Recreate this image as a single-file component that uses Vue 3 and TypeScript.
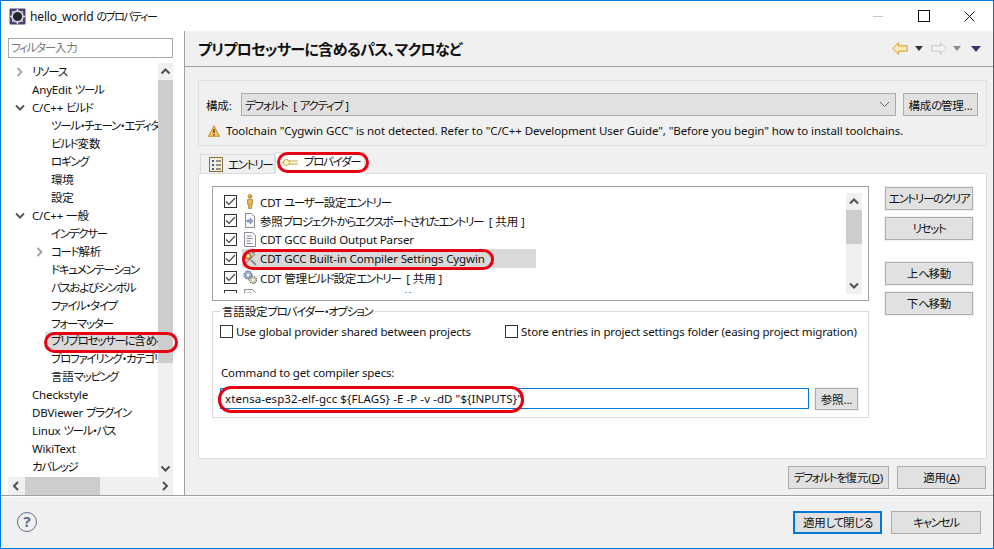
<script setup lang="ts">
import { h } from 'vue'

// Japanese kana set tighter than the rest of the text, as in the UI font of the original.
const Jp = (props: { s: string }) =>
  props.s.split(/([\u3040-\u30FF\u3001]+)/).map((part, i) =>
    i % 2 === 1 ? h('span', { class: 'k' }, part) : part,
  )
Jp.props = ['s']

interface TreeItem { label: string; level: number; arrow?: 'right' | 'down'; selected?: boolean }
const tree: TreeItem[] = [
  { label: 'リソース', level: 0, arrow: 'right' },
  { label: 'AnyEdit ツール', level: 0 },
  { label: 'C/C++ ビルド', level: 0, arrow: 'down' },
  { label: 'ツール・チェーン・エディタ', level: 1 },
  { label: 'ビルド変数', level: 1 },
  { label: 'ロギング', level: 1 },
  { label: '環境', level: 1 },
  { label: '設定', level: 1 },
  { label: 'C/C++ 一般', level: 0, arrow: 'down' },
  { label: 'インデクサー', level: 1 },
  { label: 'コード解析', level: 1, arrow: 'right' },
  { label: 'ドキュメンテーション', level: 1 },
  { label: 'パスおよびシンボル', level: 1 },
  { label: 'ファイル・タイプ', level: 1 },
  { label: 'フォーマッター', level: 1 },
  { label: 'プリプロセッサーに含めるパス、マクロなど', level: 1, selected: true },
  { label: 'プロファイリング・カテゴリー', level: 1 },
  { label: '言語マッピング', level: 1 },
  { label: 'Checkstyle', level: 0 },
  { label: 'DBViewer プラグイン', level: 0 },
  { label: 'Linux ツール・パス', level: 0 },
  { label: 'WikiText', level: 0 },
  { label: 'カバレッジ', level: 0 },
]
interface Provider { label: string; icon: string; selected?: boolean }
const providers: Provider[] = [
  { label: 'CDT ユーザー設定エントリー', icon: 'person' },
  { label: '参照プロジェクトからエクスポートされたエントリー  [ 共用 ]', icon: 'import' },
  { label: 'CDT GCC Build Output Parser', icon: 'doc' },
  { label: 'CDT GCC Built-in Compiler Settings Cygwin', icon: 'tool', selected: true },
  { label: 'CDT 管理ビルド設定エントリー  [ 共用 ]', icon: 'gears' },
  { label: 'Contributed Path Entries  [ 共用 ]', icon: 'doc' },
]
</script>

<template>
  <div class="window">
    <header class="titlebar">
      <svg class="app-icon" width="17" height="17" viewBox="0 0 17 17">
        <rect x="0.5" y="0.5" width="16" height="16" rx="1" fill="#4b3f72" />
        <circle cx="8.5" cy="8.5" r="6.2" fill="#d8d8de" />
        <circle cx="8.5" cy="8.5" r="4.6" fill="#24222e" />
        <path d="M8.5 1v3M8.5 13v3M1 8.5h3M13 8.5h3M3.2 3.2l2 2M11.8 11.8l2 2M13.8 3.2l-2 2M5.2 11.8l-2 2" stroke="#d8d8de" stroke-width="1.4" />
      </svg>
      <span class="title-text"><Jp s="hello_world のプロパティー" /></span>
      <div class="win-controls">
        <span class="ctl-min"></span>
        <span class="ctl-max"></span>
        <svg width="11" height="11" viewBox="0 0 11 11"><path d="M0.5 0.5l10 10M10.5 0.5l-10 10" stroke="#111" stroke-width="1" /></svg>
      </div>
    </header>

    <div class="main">
      <aside class="sidebar">
        <div class="filter"><Jp s="フィルター入力" /></div>
        <div class="tree-box">
          <div class="tree-list">
            <div v-for="item in tree" :key="item.label" class="tree-row" :class="{ 'lvl1': item.level === 1 }">
              <svg v-if="item.arrow === 'right'" class="chev" width="8" height="10" viewBox="0 0 8 10"><path d="M1.5 1l4 4-4 4" fill="none" stroke="#a6a6a6" stroke-width="2" /></svg>
              <svg v-else-if="item.arrow === 'down'" class="chev down" width="10" height="8" viewBox="0 0 10 8"><path d="M1 1.5l4 4 4-4" fill="none" stroke="#595959" stroke-width="2" /></svg>
              <span class="tree-label" :class="{ sel: item.selected }"><Jp :s="item.label" /></span>
            </div>
          </div>
          <div class="vscroll">
            <svg width="15" height="17" viewBox="0 0 15 17"><path d="M3.5 10.5l4-4 4 4" fill="none" stroke="#505050" stroke-width="2" /></svg>
            <div class="vtrack"><div class="vthumb"></div></div>
            <svg width="15" height="17" viewBox="0 0 15 17"><path d="M3.5 6.5l4 4 4-4" fill="none" stroke="#505050" stroke-width="2" /></svg>
          </div>
        </div>
        <div class="hscroll">
          <svg width="17" height="18" viewBox="0 0 17 18"><path d="M10 5l-4 4 4 4" fill="none" stroke="#505050" stroke-width="2" /></svg>
          <div class="hthumb"></div>
          <svg class="hright" width="17" height="18" viewBox="0 0 17 18"><path d="M7 5l4 4-4 4" fill="none" stroke="#505050" stroke-width="2" /></svg>
        </div>
      </aside>

      <section class="content">
        <div class="page-head">
          <h1 class="page-title"><Jp s="プリプロセッサーに含めるパス、マクロなど" /></h1>
          <div class="nav">
            <svg width="16" height="13" viewBox="0 0 16 13"><path d="M0.8 6.5L6.5 0.8v3h8.7v5.4H6.5v3z" fill="#fbe9b4" stroke="#d99a2b" /></svg>
            <span class="tri"></span>
            <svg class="fwd" width="16" height="13" viewBox="0 0 16 13"><path d="M15.2 6.5L9.5 0.8v3H0.8v5.4h8.7v3z" fill="#f4f4f4" stroke="#c4c4c4" /></svg>
            <span class="tri gray"></span>
            <span class="tri purple"></span>
          </div>
        </div>

        <div class="page-body">
          <div class="config">
            <div class="config-row">
              <label class="config-label">構成:</label>
              <div class="combo">
                <span class="pre"><Jp s="デフォルト  [ アクティブ ]" /></span>
                <svg width="11" height="7" viewBox="0 0 11 7"><path d="M1 1l4.500 4.500L10 1" fill="none" stroke="#666" /></svg>
              </div>
              <button class="btn manage"><Jp s="構成の管理..." /></button>
            </div>
            <div class="warn-row">
              <svg width="12" height="12" viewBox="0 0 12 12"><path d="M6 0.8L11.500 11.300H0.500z" fill="#f6c65b" stroke="#c58a2c" /><path d="M6 4v4M6 9v1.500" stroke="#333" stroke-width="1.300" /></svg>
              <span>Toolchain "Cygwin GCC" is not detected. Refer to "C/C++ Development User Guide", "Before you begin" how to install toolchains.</span>
            </div>
          </div>

          <div class="tabs">
            <div class="tab">
              <svg width="14" height="15" viewBox="0 0 14 15"><rect x="0.500" y="0.500" width="13" height="14" fill="#f3efdc" stroke="#8a6d3b" /><path d="M3 3h2v2H3zM3 7h2v2H3zM3 11h2v2H3z" fill="#2e5fa8" /><path d="M7 4h5M7 8h5M7 12h5" stroke="#333" /></svg>
              <span><Jp s="エントリー" /></span>
            </div>
            <div class="tab active">
              <svg width="16" height="9" viewBox="0 0 16 9"><circle cx="4.500" cy="4.500" r="3" fill="#fff4c0" stroke="#c9a227" /><path d="M0 4.500h2M7 3h9M7 6h9" stroke="#c9a227" /></svg>
              <span class="tab-text"><Jp s="プロバイダー" /></span>
            </div>
          </div>

          <div class="panel">
            <div class="panel-left">
              <div class="list">
                <div class="list-rows">
                  <div v-for="p in providers" :key="p.label" class="prov-row">
                    <span class="check"><svg width="11" height="11" viewBox="0 0 11 11"><path d="M1 5.500l3 3 6-6.500" fill="none" stroke="#444" stroke-width="1.200" /></svg></span>
                    <span class="prov-main" :class="{ sel: p.selected }">
                      <svg class="prov-icon" width="14" height="15" viewBox="0 0 14 15">
                        <template v-if="p.icon === 'person'">
                          <circle cx="7" cy="2.500" r="2" fill="#e2a93a" stroke="#9a6a1c" stroke-width="0.600" />
                          <path d="M4.500 5.500h5v5H8.500v4h-3v-4H4.500z" fill="#e8b24a" stroke="#9a6a1c" stroke-width="0.600" />
                        </template>
                        <template v-else-if="p.icon === 'import'">
                          <path d="M2.500 0.500h6l3 3v11h-9z" fill="#f7f7f7" stroke="#8e8e8e" />
                          <path d="M4 7h3V5l3 3-3 3V9H4z" fill="#8fa9c9" stroke="#58719a" stroke-width="0.500" />
                        </template>
                        <template v-else-if="p.icon === 'doc'">
                          <path d="M1.500 0.500h8l3 3v11h-11z" fill="#fbfbfb" stroke="#8e8e8e" />
                          <path d="M3.500 4h5M3.500 6.500h6M3.500 9h4M3.500 11.500h6" stroke="#7d8ea6" />
                        </template>
                        <template v-else-if="p.icon === 'tool'">
                          <path d="M1 14L12 3" stroke="#b58a8a" stroke-width="1.600" />
                          <circle cx="5" cy="5" r="3" fill="#eac35a" stroke="#7b6a36" />
                          <circle cx="5" cy="5" r="1" fill="#fff" />
                          <path d="M8 9l5 5" stroke="#777" stroke-width="1.600" />
                          <path d="M9 2l3-1" stroke="#777" stroke-width="1.600" />
                        </template>
                        <template v-else>
                          <circle cx="5" cy="5" r="4" fill="#9fb3cf" stroke="#44526e" stroke-dasharray="1.500 1" />
                          <circle cx="10" cy="10" r="3.600" fill="#d6c9a8" stroke="#44526e" stroke-dasharray="1.500 1" />
                          <circle cx="5" cy="5" r="1.200" fill="#fff" />
                          <circle cx="10" cy="10" r="1.200" fill="#fff" />
                        </template>
                      </svg>
                      <span class="prov-label"><Jp :s="p.label" /></span>
                    </span>
                  </div>
                </div>
                <div class="list-scroll">
                  <svg width="16" height="17" viewBox="0 0 16 17"><path d="M4 10.500l4-4 4 4" fill="none" stroke="#505050" stroke-width="2" /></svg>
                  <div class="list-track"><div class="list-thumb"></div></div>
                  <svg width="16" height="17" viewBox="0 0 16 17"><path d="M4 6.500l4 4 4-4" fill="none" stroke="#505050" stroke-width="2" /></svg>
                </div>
              </div>

              <div class="group">
                <span class="legend"><Jp s="言語設定プロバイダー・オプション" /></span>
                <div class="opts">
                  <label class="opt first"><span class="check"></span>Use global provider shared between projects</label>
                  <label class="opt"><span class="check"></span>Store entries in project settings folder (easing project migration)</label>
                </div>
                <div class="cmd-label">Command to get compiler specs:</div>
                <div class="cmd-row">
                  <div class="cmd-input">xtensa-esp32-elf-gcc ${FLAGS} -E -P -v -dD "${INPUTS}"</div>
                  <button class="btn browse">参照...</button>
                </div>
              </div>
            </div>

            <div class="panel-right">
              <button class="btn side"><Jp s="エントリーのクリア" /></button>
              <button class="btn side"><Jp s="リセット" /></button>
              <button class="btn side gap"><Jp s="上へ移動" /></button>
              <button class="btn side"><Jp s="下へ移動" /></button>
            </div>
          </div>

          <div class="apply-row">
            <button class="btn restore"><Jp s="デフォルトを復元" />(<u>D</u>)</button>
            <button class="btn apply">適用(<u>A</u>)</button>
          </div>
        </div>
      </section>
    </div>

    <footer class="footer">
      <span class="help">?</span>
      <div class="foot-btns">
        <button class="btn foot primary"><Jp s="適用して閉じる" /></button>
        <button class="btn foot"><Jp s="キャンセル" /></button>
      </div>
    </footer>

    <span class="mark mark-side"></span>
    <span class="mark mark-tab"></span>
    <span class="mark mark-row"></span>
    <span class="mark mark-cmd"></span>
  </div>
</template>

<style scoped>
.window {
  position: relative;
  width: 994px;
  height: 549px;
  box-sizing: border-box;
  border: 1px solid #0078d7;
  display: flex;
  flex-direction: column;
  background: #fff;
  overflow: hidden;
  color: #111;
  font-family: "Noto Sans", "Noto Sans CJK JP", sans-serif;
  font-size: 11.5px;
  font-feature-settings: "palt";
  letter-spacing: -0.15px;
}
button {
  font: inherit;
  font-feature-settings: inherit;
  letter-spacing: inherit;
  color: inherit;
  padding: 0;
}
.titlebar {
  height: 30px;
  flex: none;
  display: flex;
  align-items: center;
  padding-left: 8px;
}
.title-text { margin-left: 4px; font-size: 12px; }
.win-controls {
  margin-left: auto;
  display: flex;
  align-items: center;
  padding-right: 18px;
}
.ctl-min { width: 10px; height: 1px; background: #c8c8c8; margin-right: 35px; }
.ctl-max { width: 10px; height: 10px; border: 1px solid #111; margin-right: 34px; }

.main { flex: 1; display: flex; min-height: 0; }
.sidebar {
  width: 184px;
  box-sizing: border-box;
  flex: none;
  padding: 7px 0 0 7px;
  border-right: 1px solid #a0a0a0;
  display: flex;
  flex-direction: column;
}
.filter {
  width: 165px;
  height: 20px;
  box-sizing: border-box;
  border: 1px solid #a9a9a9;
  padding-left: 2px;
  line-height: 17px;
  color: #777;
}
.tree-box { display: flex; width: 165px; height: 414px; margin-top: 5px; }
.tree-list { width: 150px; overflow: hidden; padding-top: 0.4px; }
.tree-row {
  position: relative;
  height: 17.95px;
  line-height: 18px;
  padding-left: 24px;
  white-space: nowrap;
}
.tree-row.lvl1 { padding-left: 43px; }
.tree-label { display: inline-block; }
.tree-label.sel { background: #d9d9d9; display: block; margin-left: -6px; padding-left: 6px; }
.chev { position: absolute; left: 8px; top: 4px; }
.chev.down { left: 7px; top: 5px; }
.lvl1 .chev { left: 28px; top: 4px; }
.vscroll { width: 15px; display: flex; flex-direction: column; background: #f0f0f0; }
.vtrack { flex: 1; }
.vthumb { height: 283px; background: #cdcdcd; }
.hscroll { width: 165px; height: 18px; display: flex; background: #f0f0f0; }
.hthumb { width: 75px; background: #cdcdcd; }
.hright { margin-left: auto; margin-right: 0; }

.content { flex: 1; min-width: 0; display: flex; flex-direction: column; background: #f0f0f0; }
.page-head {
  height: 35px;
  flex: none;
  border-bottom: 1px solid #a0a0a0;
  display: flex;
  align-items: center;
  padding: 0 12px 0 13px;
}
.page-title { margin: 0; font-size: 15px; font-weight: 700; letter-spacing: -0.3px; }
.nav { margin-left: auto; display: flex; align-items: center; padding-right: 0; }
.nav .fwd { margin-left: 8px; }
.tri {
  width: 0; height: 0;
  margin-left: 7px;
  border-left: 4px solid transparent;
  border-right: 4px solid transparent;
  border-top: 5px solid #333;
}
.tri.gray { margin-left: 6px; border-top-color: #8c8c8c; }
.tri.purple { margin-left: 10px; border-left-width: 5px; border-right-width: 5px; border-top-width: 6px; border-top-color: #46306e; }

.page-body { flex: 1; padding: 13px 6px 0 13px; display: flex; flex-direction: column; min-height: 0; }
.config {
  height: 66px;
  flex: none;
  box-sizing: border-box;
  border: 1px solid #e0e0e0;
  padding: 12px 8px 0 7px;
}
.config-row { display: flex; align-items: center; }
.config-label { width: 35px; flex: none; }
.pre { white-space: pre; }
.combo {
  width: 655px;
  height: 23px;
  box-sizing: border-box;
  background: #e1e1e1;
  border: 1px solid #adadad;
  padding: 0 5px 0 3px;
  display: flex;
  align-items: center;
  justify-content: space-between;
}
.btn {
  box-sizing: border-box;
  background: #e1e1e1;
  border: 1px solid #adadad;
  box-shadow: 0 0 0 1px #f0f0f0;
  display: block;
  text-align: center;
  white-space: nowrap;
}
.manage { width: 75px; height: 23px; margin-left: 7px; }
.warn-row { display: flex; align-items: center; gap: 6px; margin-top: 7px; padding-left: 2px; white-space: nowrap; letter-spacing: -0.09px; }

.tabs { height: 22px; margin-top: 6px; margin-bottom: -1px; display: flex; align-items: flex-end; padding-left: 2px; flex: none; position: relative; z-index: 1; }
.tab {
  height: 20px;
  box-sizing: border-box;
  width: 75px;
  border: 1px solid #dcdcdc;
  border-bottom: none;
  display: flex;
  align-items: center;
  gap: 5px;
  padding: 0 0 1px 8px;
  white-space: nowrap;
}
.tab.active { height: 22px; width: 90px; background: #fff; gap: 6px; padding-left: 6px; padding-bottom: 3px; }
.tab-text { line-height: 16px; }
.panel {
  height: 286px;
  flex: none;
  box-sizing: border-box;
  background: #fff;
  border: 1px solid #dcdcdc;
  padding: 12px 0 0 13px;
  display: flex;
}
.panel-left { width: 657px; flex: none; }
.list {
  height: 115px;
  box-sizing: border-box;
  border: 1px solid #a0a0a0;
  padding: 5px 6px 7px 11px;
  display: flex;
}
.list-rows { width: 622px; overflow: hidden; }
.prov-row { height: 19px; display: flex; align-items: center; white-space: pre; position: relative; letter-spacing: -0.13px; }
.check {
  width: 13px; height: 13px;
  flex: none;
  box-sizing: border-box;
  border: 1px solid #333;
  background: #fff;
  display: inline-flex;
  align-items: center;
  justify-content: center;
}
.prov-main { display: flex; align-items: center; margin-left: 5px; gap: 3px; flex: 1; height: 19px; padding-left: 1px; }
.prov-main.sel { background: #d9d9d9; flex: none; width: 293px; }
.prov-icon { flex: none; }
.list-scroll { width: 16px; margin: 1px 0 -1px 6px; display: flex; flex-direction: column; background: #f0f0f0; }
.list-track { flex: 1; }
.list-thumb { height: 34px; background: #cdcdcd; }

.group {
  position: relative;
  height: 107px;
  box-sizing: border-box;
  margin-top: 10px;
  border: 1px solid #dcdcdc;
  padding: 12px 10px 0 7px;
}
.legend { position: absolute; left: 7px; top: -8px; background: #fff; padding: 0 2px; line-height: 15px; }
.opts { display: flex; }
.opt { display: flex; align-items: center; gap: 3px; white-space: nowrap; }
.opt.first { width: 285px; }
.cmd-label { margin-top: 26px; line-height: 16px; padding-left: 1px; }
.cmd-row { display: flex; margin-top: 7px; }
.cmd-input {
  width: 589px;
  height: 21px;
  box-sizing: border-box;
  border: 1px solid #0078d7;
  padding-left: 4px;
  line-height: 19px;
  white-space: nowrap;
  letter-spacing: 0.08px;
}
.browse { width: 43px; height: 22px; margin-left: 6px; }

.panel-right { margin-left: 16px; padding-top: 1px; display: flex; flex-direction: column; gap: 7px; }
.side { width: 88px; height: 23px; padding-bottom: 1px; }
.side.gap { margin-top: 15px; }

.apply-row { display: flex; justify-content: flex-end; gap: 8px; margin-top: 7px; padding-right: 1px; }
.restore { width: 101px; height: 23px; padding-bottom: 1px; }
.apply { width: 89px; height: 23px; padding-bottom: 1px; }

.footer {
  height: 53px;
  flex: none;
  box-sizing: border-box;
  border-top: 1px solid #a0a0a0;
  box-shadow: inset 0 1px 0 #fff;
  background: #f0f0f0;
  display: flex;
  align-items: center;
  padding: 0 12px 0 16px;
}
.help {
  width: 20px; height: 20px;
  box-sizing: border-box;
  border: 1.5px solid #5f6e8a;
  border-radius: 50%;
  color: #5f6e8a;
  font-weight: 700;
  font-size: 15px;
  line-height: 17px;
  text-align: center;
}
.foot-btns { margin-left: auto; display: flex; gap: 9px; }
.foot { width: 90px; height: 23px; }
.foot.primary { width: 89px; border: 2px solid #0078d7; }

.mark { position: absolute; z-index: 2; border: 3px solid #e60012; border-radius: 13px; box-sizing: border-box; pointer-events: none; }
.mark-side { left: 43px; top: 331px; width: 134px; height: 21px; }
.mark-tab { left: 276px; top: 151px; width: 92px; height: 21px; }
.mark-row { left: 241px; top: 248px; width: 252px; height: 21px; }
.mark-cmd { left: 217px; top: 385px; width: 306px; height: 27px; }
</style>

<style>
.k { letter-spacing: -1.3px; }
.page-title .k { letter-spacing: -0.7px; }
.title-text .k { font-size: 11px; letter-spacing: -1.5px; }
</style>
